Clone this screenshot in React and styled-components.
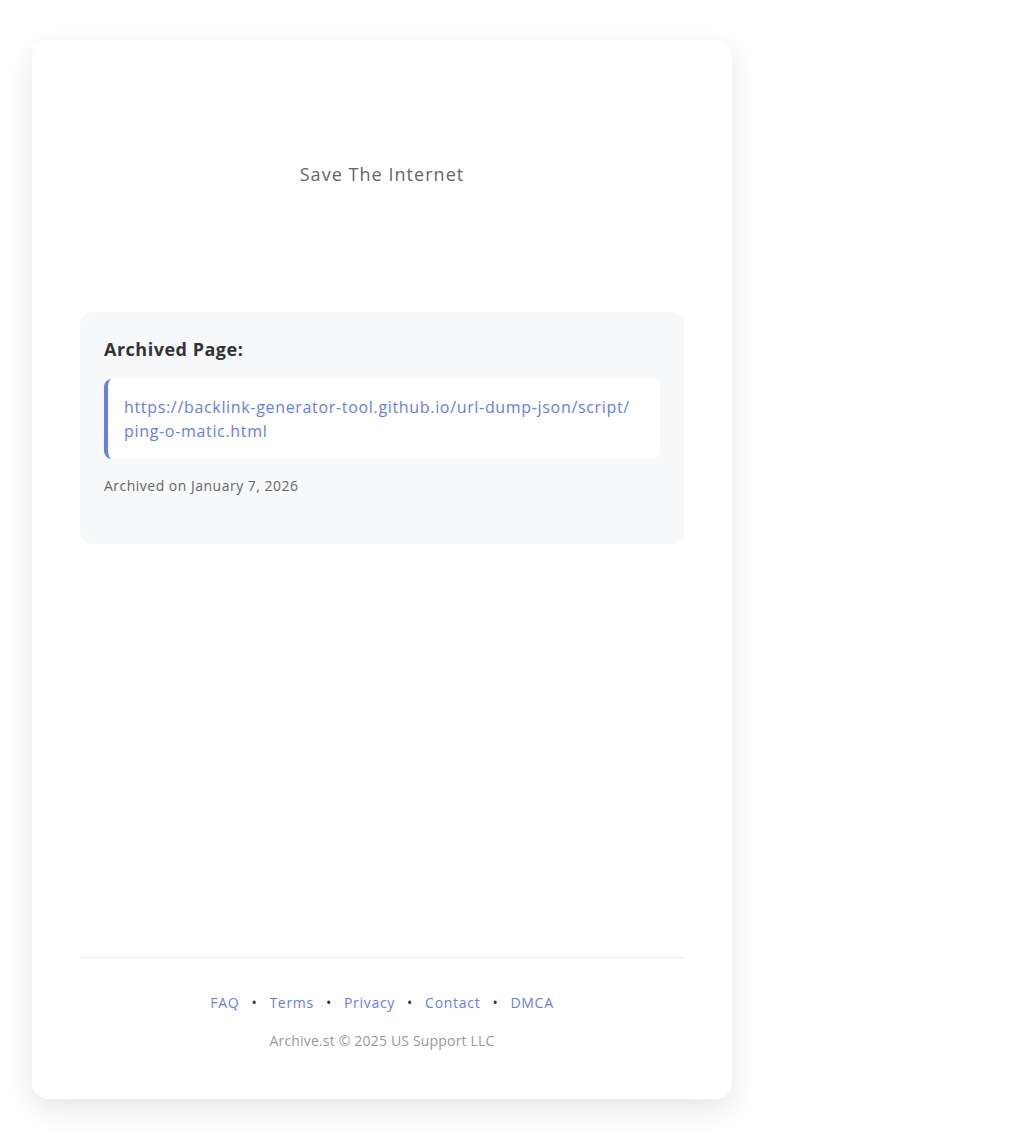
import styled, { createGlobalStyle } from "styled-components";

const GlobalStyle = createGlobalStyle`
  html, body {
    margin: 0;
    padding: 0;
    background: #ffffff;
  }

  body {
    font-family: "Open Sans", "Liberation Sans", sans-serif;
    letter-spacing: 0.045em;
    color: #333333;
  }
`;

const FOOTER_LINKS = ["FAQ", "Terms", "Privacy", "Contact", "DMCA"];

function App() {
  return (
    <>
      <GlobalStyle />
      <Page>
        <Card>
          <Header>
            <Tagline>Save The Internet</Tagline>
          </Header>

          <InfoBox>
            <InfoTitle>Archived Page:</InfoTitle>
            <UrlBox>
              <UrlLink href="#">
                https://backlink-generator-tool.github.io/url-dump-json/script/<wbr />ping-o-matic.html
              </UrlLink>
            </UrlBox>
            <ArchivedDate>Archived on January 7, 2026</ArchivedDate>
          </InfoBox>

          <Footer>
            <FooterLinks>
              {FOOTER_LINKS.map((label, i) => (
                <FooterItem key={label}>
                  {i > 0 && <Dot>•</Dot>}
                  <FooterLink href="#">{label}</FooterLink>
                </FooterItem>
              ))}
            </FooterLinks>
            <Copyright>Archive.st © 2025 US Support LLC</Copyright>
          </Footer>
        </Card>
      </Page>
    </>
  );
}

const Page = styled.div`
  padding: 40px 32px 32px;
  box-sizing: border-box;
  min-height: 100vh;
`;

const Card = styled.main`
  width: 700px;
  min-height: 1059px;
  box-sizing: border-box;
  padding: 48px;
  display: flex;
  flex-direction: column;

  background: #ffffff;
  border-radius: 16px;
  box-shadow: 0 10px 30px rgba(0, 0, 0, 0.1);
`;

const Header = styled.header`
  height: 172px;
  display: flex;
  align-items: center;
  justify-content: center;
  padding-bottom: 52px;
`;

const Tagline = styled.p`
  margin: 0;
  color: #666666;
  font-size: 18px;
  line-height: 27px;
  letter-spacing: 0.058em;
`;

const InfoBox = styled.section`
  padding: 24px 24px 48px;
  background: #f8f9fa;
  border-radius: 12px;
`;

const InfoTitle = styled.h2`
  margin: 0 0 16px;
  color: #333333;
  font-size: 18px;
  font-weight: 700;
  line-height: 27px;
  letter-spacing: 0.028em;
`;

const UrlBox = styled.div`
  padding: 16px 20px 16px 16px;
  background: #ffffff;
  border-left: 4px solid #667eea;
  border-radius: 8px;
`;

const UrlLink = styled.a`
  color: #667eea;
  font-size: 16px;
  line-height: 24px;
  letter-spacing: 0.042em;
  text-decoration: none;
  overflow-wrap: break-word;
`;

const ArchivedDate = styled.p`
  margin: 16px 0 0;
  color: #666666;
  font-size: 14px;
  line-height: 21px;
  letter-spacing: 0.035em;
`;

const Footer = styled.footer`
  margin-top: auto;
  padding-top: 34px;
  border-top: 1px solid #eeeeee;
  text-align: center;
`;

const FooterLinks = styled.nav`
  display: flex;
  justify-content: center;
  align-items: center;
`;

const FooterItem = styled.span`
  display: inline-flex;
  align-items: center;
`;

const Dot = styled.span`
  margin: 0 12px;
  color: #333333;
  font-size: 14px;
`;

const FooterLink = styled.a`
  color: #667eea;
  font-size: 14px;
  line-height: 21px;
  text-decoration: none;
`;

const Copyright = styled.p`
  margin: 17px 0 0;
  color: #999999;
  font-size: 14px;
  line-height: 21px;
  letter-spacing: 0.013em;
`;

export default App;
